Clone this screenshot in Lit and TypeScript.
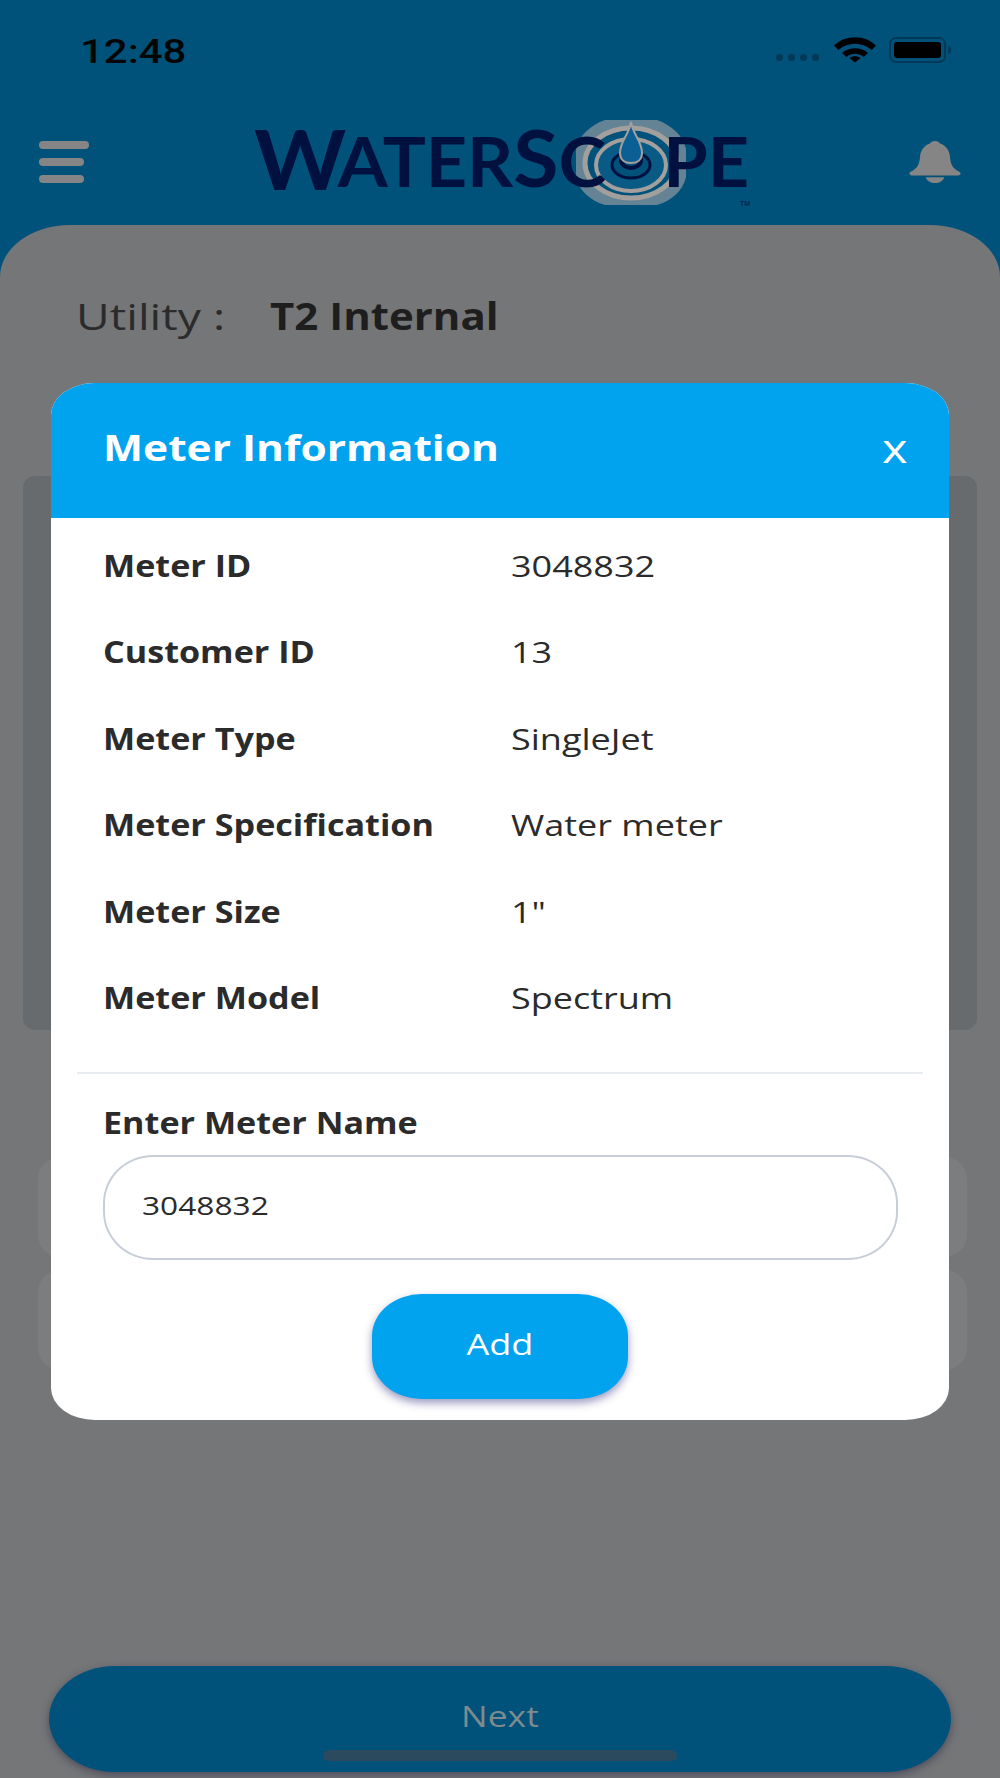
import { LitElement, html, css, svg } from "lit";
import { customElement } from "lit/decorators.js";

const ROWS = [
  ["Meter ID", "3048832"],
  ["Customer ID", "13"],
  ["Meter Type", "SingleJet"],
  ["Meter Specification", "Water meter"],
  ["Meter Size", '1"'],
  ["Meter Model", "Spectrum"],
];

const logo = svg`<svg class="logo" width="510" height="92" viewBox="0 0 510 92">
  <g transform="translate(377 43)">
    <path d="M-26 -43 L26 -43 C40 -38 52 -28 55 -14 L55 14 C52 28 40 38 26 42 L-26 42 C-40 38 -52 28 -55 14 L-55 -14 C-52 -28 -40 -38 -26 -43Z" fill="#648496"/>
    <ellipse cx="0" cy="0" rx="46" ry="35" fill="#00527a" stroke="#a39f9c" stroke-width="5"/>
    <ellipse cx="0" cy="2" rx="35" ry="26" fill="#0a5a86" stroke="#a39f9c" stroke-width="4"/>
    <ellipse cx="0" cy="2" rx="19" ry="13" fill="#00527a" stroke="#00103f" stroke-width="3"/>
    <ellipse cx="0" cy="-3" rx="10" ry="8" fill="none" stroke="#00103f" stroke-width="4"/>
    <path d="M0 -41 C2 -28 11 -22 11 -10 C11 -3 6 0 0 0 C-6 0 -11 -3 -11 -10 C-11 -22 -2 -28 0 -41Z" fill="#0a5f94" stroke="#a39f9c" stroke-width="2"/>
  </g>
  <text y="70" font-family="Lato, 'Liberation Sans', sans-serif" font-weight="700" fill="#00103f" font-size="83" textLength="495" lengthAdjust="spacingAndGlyphs">W<tspan font-size="68" dy="-3" dx="-8">ATER</tspan><tspan font-size="78">S</tspan><tspan font-size="68">C</tspan><tspan font-size="68" fill="none">O</tspan><tspan font-size="68">PE</tspan></text>
  <text x="486" y="86" font-family="'Liberation Sans', sans-serif" font-size="7" fill="#00103f">TM</text>
</svg>`;

const wifi = svg`<svg width="42" height="26" viewBox="0 0 42 26" fill="#000">
  <path d="M0 8.5 C11 -2.6 31 -2.6 42 8.5 L37.5 13 C28.5 4.5 13.5 4.5 4.5 13Z"/>
  <path d="M8 16 C15 9.8 27 9.8 34 16 L29.6 20 C24.8 15.6 17.2 15.6 12.4 20Z"/>
  <path d="M15.5 22 C18.6 19.6 23.4 19.6 26.5 22 L21 26.5Z" transform="translate(0 -1)"/>
</svg>`;

const bell = svg`<svg width="52" height="42" viewBox="0 0 52 42" fill="#858585">
  <path d="M26 0 C28.6 0 30 1 31 2.6 C37 4.4 40.6 9.8 41 16 C41.4 23 44 28 50 30.4 C52.4 31.6 52 34.4 49 34.4 L3 34.4 C0 34.4 -0.4 31.6 2 30.4 C8 28 10.6 23 11 16 C11.4 9.8 15 4.4 21 2.6 C22 1 23.4 0 26 0Z"/>
  <path d="M16.6 36.2 L35.4 36.2 C34 40 30.4 42 26 42 C21.6 42 18 40 16.6 36.2Z"/>
</svg>`;

@customElement("app-root")
export class AppRoot extends LitElement {
  static styles = css`
    :host {
      display: block;
      position: relative;
      width: 1000px;
      height: 1778px;
      overflow: hidden;
      background: #00527a;
      font-family: "Open Sans", "Noto Sans", sans-serif;
      color: #2b2b2b;
    }
    .t {
      display: inline-block;
      white-space: nowrap;
      transform-origin: left center;
    }
    .center { transform-origin: center center; }
    .status {
      height: 104px;
      box-sizing: border-box;
      padding: 30px 49px 0 80px;
      display: flex;
      justify-content: space-between;
      align-items: flex-start;
    }
    .time {
      font-family: Roboto, sans-serif;
      font-weight: 500;
      font-size: 33px;
      line-height: 44px;
      color: #050505;
    }
    .time .t { transform: scaleX(1.27); }
    .sys {
      display: flex;
      align-items: center;
      gap: 13px;
      padding-top: 7px;
    }
    .dots { display: flex; gap: 5px; margin-top: 14px; margin-right: 2px; }
    .dots i { width: 7px; height: 7px; border-radius: 3px; background: #013a58; }
    .battery {
      display: flex;
      align-items: center;
      gap: 2px;
    }
    .battery .shell {
      width: 47px;
      height: 16px;
      padding: 3px;
      border: 2px solid #013a58;
      border-radius: 7px;
      display: flex;
    }
    .battery .fill { flex: 1; background: #000; border-radius: 3px; }
    .battery .nub { width: 3px; height: 8px; background: #013a58; border-radius: 0 3px 3px 0; }
    .nav {
      height: 121px;
      box-sizing: border-box;
      padding: 16px 39px 0;
      display: flex;
      justify-content: space-between;
      align-items: flex-start;
    }
    .menu { display: flex; flex-direction: column; gap: 9px; padding-top: 21px; }
    .menu i { display: block; height: 8px; width: 45px; border-radius: 4px; background: #858585; }
    .menu i:first-child { width: 50px; }
    .logo { display: block; overflow: visible; margin-left: 19px; }
    .bell { padding-top: 21px; }
    .sheet {
      height: 1553px;
      box-sizing: border-box;
      background: #757678;
      border-radius: 70px 70px 0 0 / 52px 52px 0 0;
      padding: 66px 23px 0;
      display: flex;
      flex-direction: column;
    }
    .utility {
      padding-left: 53px;
      display: flex;
      font-size: 37px;
      line-height: 50px;
      height: 185px;
      color: #222;
    }
    .utility .lab { width: 194px; color: #2b2b2b; }
    .utility .lab .t { transform: scaleX(1.25); }
    .utility .val { font-weight: 700; color: #1e1e1e; }
    .utility .val .t { transform: scaleX(1.135); }
    .card { height: 554px; background: #686b6e; border-radius: 12px; margin-bottom: 127px; }
    .ghost {
      height: 100px;
      margin: 0 10px 13px 15px;
      border-radius: 22px;
      background: #7c7d7f;
    }
    .spacer { flex: 1; }
    .next {
      margin: 0 26px 6px;
      height: 106px;
      box-sizing: border-box;
      padding-bottom: 8px;
      border-radius: 66px / 53px;
      background: #00527a;
      box-shadow: 0 3px 8px rgba(40, 40, 70, 0.55);
      display: flex;
      align-items: center;
      justify-content: center;
      font-size: 30px;
      color: #7f8a8f;
    }
    .next .t { transform: scaleX(1.18); }
    .homebar {
      position: absolute;
      left: 323px;
      top: 1750px;
      width: 354px;
      height: 11px;
      border-radius: 6px;
      background: #2b4a5e;
    }
    .modal {
      position: absolute;
      left: 51px;
      top: 383px;
      width: 898px;
      height: 1037px;
      border-radius: 44px / 32px;
      overflow: hidden;
      background: #fff;
      display: flex;
      flex-direction: column;
    }
    .mhead {
      height: 135px;
      flex: none;
      box-sizing: border-box;
      background: #01a3ef;
      color: #fff;
      padding: 40px 40px 0 52px;
      display: flex;
      justify-content: space-between;
      align-items: flex-start;
    }
    .title { font-size: 36px; line-height: 50px; font-weight: 700; }
    .title .t { transform: scaleX(1.18); }
    .close { font-size: 40px; line-height: 50px; width: 27px; }
    .close .t { transform: scaleX(1.22); }
    .rows { padding: 4px 52px 0; }
    .row { display: grid; grid-template-columns: 408px 1fr; height: 86.5px; align-items: center; font-size: 30px; }
    .key { font-weight: 700; }
    .key .t { transform: scaleX(1.138); }
    .val-text { font-weight: 400; }
    .val-text .t { transform: scaleX(1.2); }
    .divider { height: 2px; background: #e8ecf0; margin: 31px 26px 0; }
    .entry { padding: 24px 52px 0; }
    .entry label { display: block; font-size: 30px; line-height: 50px; font-weight: 700; }
    .entry label .t { transform: scaleX(1.138); }
    .input {
      margin-top: 7px;
      height: 105px;
      width: 795px;
      box-sizing: border-box;
      border: 2px solid #c8ced8;
      border-radius: 50px / 48px;
      display: flex;
      align-items: center;
      padding: 0 0 6px 37px;
      font-size: 26px;
    }
    .input .t { transform: scaleX(1.218); }
    .add {
      margin: 34px auto 0;
      width: 256px;
      height: 105px;
      border-radius: 50px / 42px;
      background: #01a3ef;
      box-shadow: 0 4px 8px rgba(70, 70, 140, 0.55);
      color: #fff;
      font-size: 30px;
      display: flex;
      align-items: center;
      justify-content: center;
      padding-bottom: 6px;
      box-sizing: border-box;
    }
    .add .t { transform: scaleX(1.2); }
  `;

  render() {
    return html`
      <div class="status">
        <div class="time"><span class="t">12:48</span></div>
        <div class="sys">
          <div class="dots"><i></i><i></i><i></i><i></i></div>
          ${wifi}
          <div class="battery"><div class="shell"><div class="fill"></div></div><div class="nub"></div></div>
        </div>
      </div>
      <div class="nav">
        <div class="menu"><i></i><i></i><i></i></div>
        ${logo}
        <div class="bell">${bell}</div>
      </div>
      <div class="sheet">
        <div class="utility">
          <div class="lab"><span class="t">Utility :</span></div>
          <div class="val"><span class="t">T2 Internal</span></div>
        </div>
        <div class="card"></div>
        <div class="ghost"></div>
        <div class="ghost"></div>
        <div class="spacer"></div>
        <div class="next"><span class="t center">Next</span></div>
      </div>
      <div class="homebar"></div>
      <div class="modal">
        <div class="mhead">
          <div class="title"><span class="t">Meter Information</span></div>
          <div class="close"><span class="t">x</span></div>
        </div>
        <div class="rows">
          ${ROWS.map(([k, v]) => html`<div class="row"><div class="key"><span class="t">${k}</span></div><div class="val-text"><span class="t">${v}</span></div></div>`)}
        </div>
        <div class="divider"></div>
        <div class="entry">
          <label><span class="t">Enter Meter Name</span></label>
          <div class="input"><span class="t">3048832</span></div>
          <div class="add"><span class="t center">Add</span></div>
        </div>
      </div>
    `;
  }
}
